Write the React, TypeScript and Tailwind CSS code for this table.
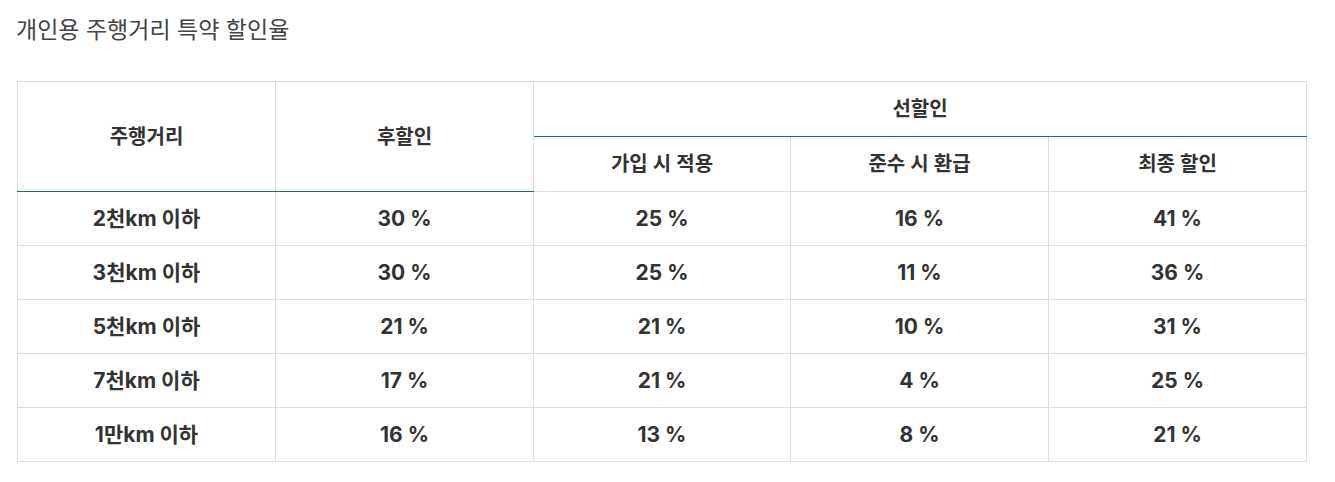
import React from "react";

const rows = [
  ["2천km 이하", "30 %", "25 %", "16 %", "41 %"],
  ["3천km 이하", "30 %", "25 %", "11 %", "36 %"],
  ["5천km 이하", "21 %", "21 %", "10 %", "31 %"],
  ["7천km 이하", "17 %", "21 %", "4 %", "25 %"],
  ["1만km 이하", "16 %", "13 %", "8 %", "21 %"],
];

export default function App() {
  return (
    <div
      className="bg-white w-[1335px] h-[482px] pl-[17px] pr-[29px] pt-[16px] text-[#333]"
      style={{ fontFamily: 'Inter, "Noto Sans CJK KR", "Noto Sans", sans-serif' }}
    >
      <h2 className="text-[23px] leading-[28px] font-normal text-[#444] -ml-[1px]">개인용 주행거리 특약 할인율</h2>
      <table className="mt-[37px] w-[1289px] border-collapse table-fixed">
        <colgroup>
          <col className="w-[258px]" />
          <col className="w-[258px]" />
          <col className="w-[257px]" />
          <col className="w-[258px]" />
          <col className="w-[258px]" />
        </colgroup>
        <thead>
          <tr className="h-[55px]">
            <th rowSpan={2} className="border border-[#ddd] border-b-[#1a6b9c] text-[20px] font-semibold align-middle">주행거리</th>
            <th rowSpan={2} className="border border-[#ddd] border-b-[#1a6b9c] text-[20px] font-semibold align-middle">후할인</th>
            <th colSpan={3} className="border border-[#ddd] border-b-[#1a6b9c] text-[20px] font-semibold">선할인</th>
          </tr>
          <tr className="h-[55px]">
            <th className="border border-[#ddd] border-t-[#1a6b9c] text-[20px] font-semibold">가입 시 적용</th>
            <th className="border border-[#ddd] border-t-[#1a6b9c] text-[20px] font-semibold">준수 시 환급</th>
            <th className="border border-[#ddd] border-t-[#1a6b9c] text-[20px] font-semibold">최종 할인</th>
          </tr>
        </thead>
        <tbody>
          {rows.map((r, i) => (
            <tr key={i} className="h-[54px]">
              {r.map((c, j) => (
                <td key={j} className="border border-[#ddd] text-center text-[21px] font-bold">
                  {c}
                </td>
              ))}
            </tr>
          ))}
        </tbody>
      </table>
    </div>
  );
}
